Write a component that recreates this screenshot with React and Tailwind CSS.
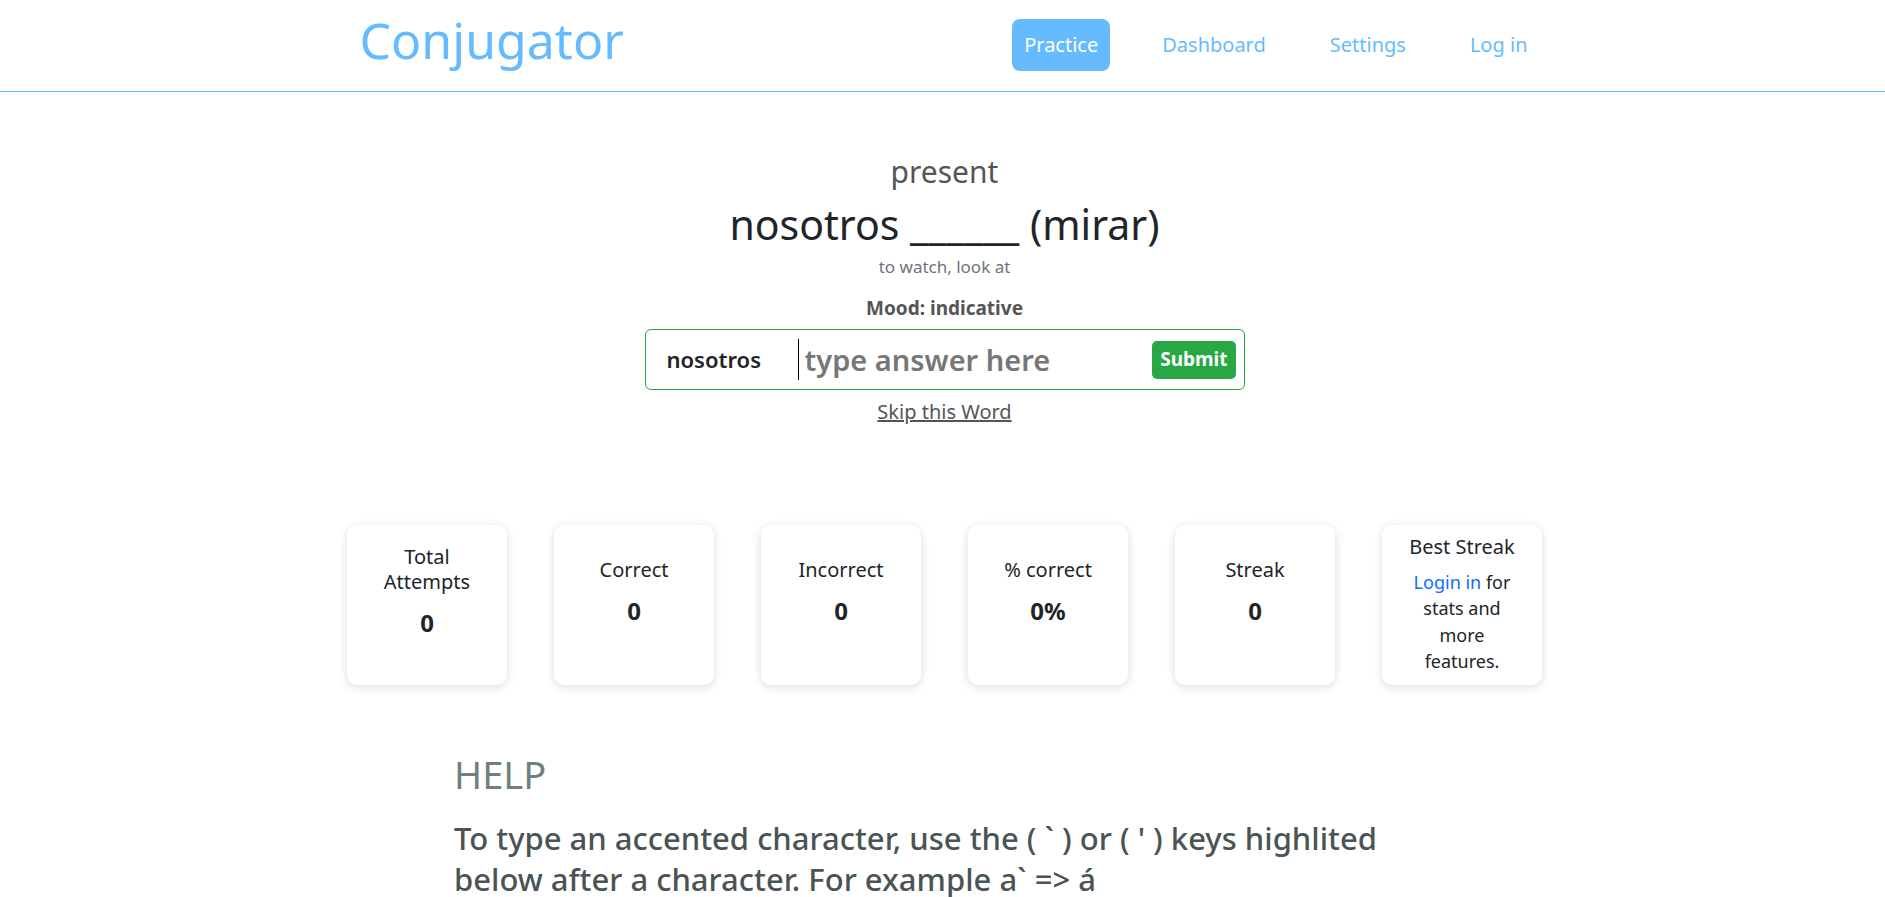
import { useState } from "react";

const navLinks = ["Practice", "Dashboard", "Settings", "Log in"];

const stats = [
  { label: "Total Attempts", value: "0", narrow: true },
  { label: "Correct", value: "0" },
  { label: "Incorrect", value: "0" },
  { label: "% correct", value: "0%" },
  { label: "Streak", value: "0" },
];

const StatCard = ({ label, value, narrow }) => {
  return (
    <div className="w-[160px] h-[160px] bg-white rounded-[10px] shadow-[0_2px_10px_rgba(0,0,0,0.14)] flex flex-col items-center justify-center pb-[28px] gap-[14px]">
      <div
        className={`text-[20px] leading-[25px] text-[#212529] text-center ${
          narrow ? "w-[110px]" : ""
        }`}
      >
        {label}
      </div>
      <div className="text-[24px] leading-[30px] font-bold text-[#212529]">
        {value}
      </div>
    </div>
  );
};

const App = () => {
  const [answer, setAnswer] = useState("");
  const active = "Practice";

  return (
    <div className="min-h-screen bg-white font-['Noto_Sans',sans-serif]">
      <header className="border-b border-[#66bbff]">
        <div className="w-[1194px] mx-auto h-[91px] flex items-center justify-between">
          <a className="pl-[14px] pb-[12px] text-[50px] leading-[1.2] text-[#66bbff]">
            Conjugator
          </a>
          <nav className="flex items-center gap-[40px] pb-[2px] text-[20px]">
            {navLinks.map((link) =>
              link == active ? (
                <a
                  key={link}
                  className="px-3 py-[11px] leading-[30px] rounded-lg bg-[#66bbff] text-white"
                >
                  {link}
                </a>
              ) : (
                <a
                  key={link}
                  className="px-3 py-[11px] leading-[30px] text-[#66bbff]"
                >
                  {link}
                </a>
              )
            )}
          </nav>
        </div>
      </header>

      <main className="flex flex-col items-center pl-[4px]">
        <div className="mt-[57px] text-[30px] leading-[45px] text-[#555]">
          present
        </div>
        <div className="mt-[6px] text-[41px] leading-[48px] text-[#212529]">
          nosotros ______ (mirar)
        </div>
        <div className="mt-[7px] text-[17px] leading-[24px] text-[#6c757d]">
          to watch, look at
        </div>
        <div className="mt-[16px] text-[19px] leading-[26px] font-bold text-[#555]">
          Mood: indicative
        </div>

        <div className="mt-[8px] w-[600px] h-[61px] border border-[#28a745] rounded-[6px] flex items-center">
          <div className="w-[152px] pl-[21px] text-[22px] font-semibold text-[#212529]">
            nosotros
          </div>
          <div className="h-[41px] border-l border-black" />
          <input
            value={answer}
            onChange={(e) => setAnswer(e.target.value)}
            placeholder="type answer here"
            className="flex-1 min-w-0 pl-[6px] text-[29px] font-semibold text-[#212529] placeholder:text-[#777] outline-none bg-transparent"
          />
          <button className="mr-[8px] h-[38px] px-[8px] rounded-[5px] bg-[#28a745] text-white text-[19px] font-bold">
            Submit
          </button>
        </div>

        <a className="mt-[7px] text-[20px] leading-[30px] text-[#555] underline">
          Skip this Word
        </a>

        <div className="mt-[98px] flex gap-[47px]">
          {stats.map((s) => (
            <StatCard key={s.label} {...s} />
          ))}
          <div className="w-[160px] h-[160px] bg-white rounded-[10px] shadow-[0_2px_10px_rgba(0,0,0,0.14)] flex flex-col items-center pt-[9px] px-6">
            <div className="text-[20px] leading-[25px] text-[#212529]">
              Best Streak
            </div>
            <p className="mt-[10px] text-[18px] leading-[26.4px] text-center text-[#212529]">
              <a className="text-[#0d6efd]">Login in</a> for stats and more
              features.
            </p>
          </div>
        </div>

        <section className="w-[977px] -ml-[4px] mt-[67px] pb-10">
          <h2 className="text-[38px] leading-[45px] text-[#6f8080]">HELP</h2>
          <p className="mt-[21px] w-[940px] text-[31px] leading-[41px] font-medium text-[#4a5454]">
            To type an accented character, use the ( ` ) or ( ' ) keys
            highlited below after a character. For example a` =&gt; á
          </p>
        </section>
      </main>
    </div>
  );
};

export default App;
